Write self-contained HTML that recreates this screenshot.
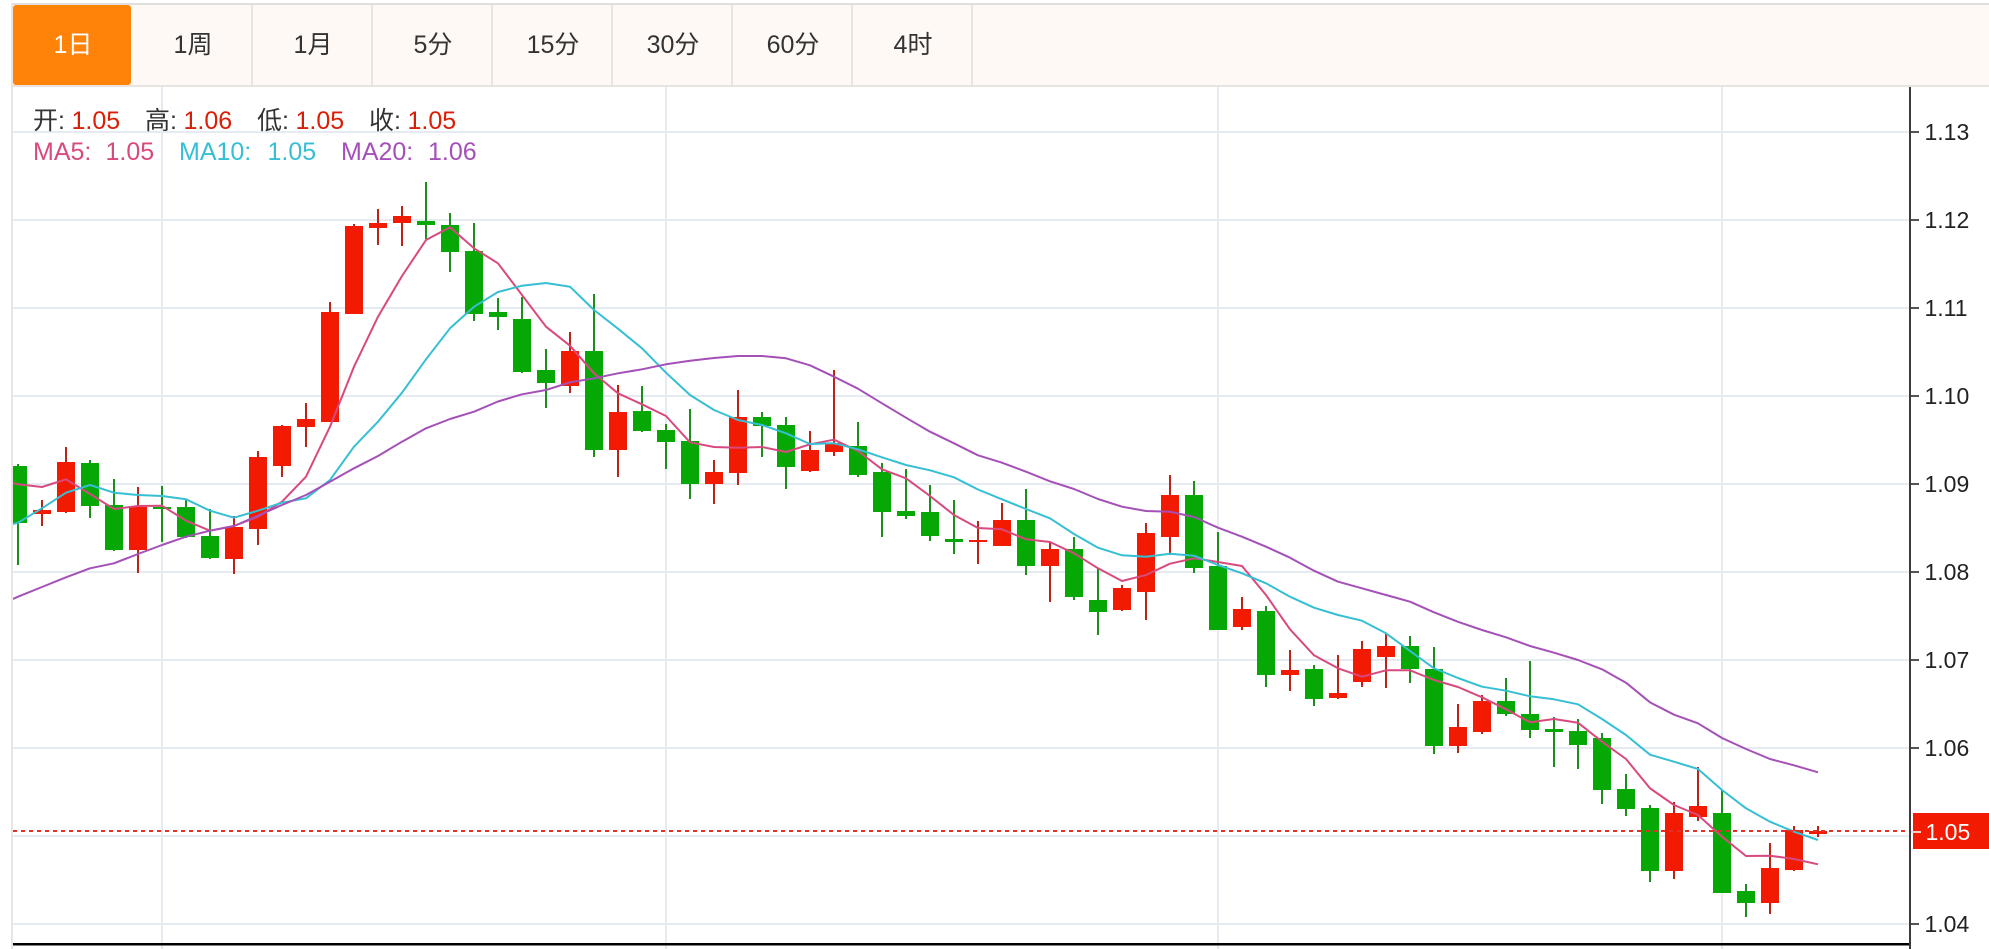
<!DOCTYPE html>
<html><head><meta charset="utf-8"><title>K线图</title>
<style>
html,body{margin:0;padding:0;background:#fff;width:1989px;height:949px;overflow:hidden}
body{position:relative;font-family:"Liberation Sans","WenQuanYi Zen Hei","Noto Sans CJK SC",sans-serif}
.bar{position:absolute;left:12px;top:3px;width:1977px;background:#fef9f5;border-top:2px solid #e0dedc;border-bottom:2px solid #e8e4e0;box-sizing:content-box;height:80px}
.t{position:absolute;top:5px;height:80px;line-height:80px;text-align:center;font-size:25px;color:#333;width:120px;box-sizing:border-box;padding-left:2px}
.sep{position:absolute;top:5px;width:2px;height:80px;background:#e8e4e0}
.act{left:13px;width:118px;background:#ff8209;color:#fff;border-radius:3px}
.l{position:absolute;font-size:25px;line-height:28px;white-space:nowrap}
svg{position:absolute;left:0;top:0}
svg text{font-family:"Liberation Sans",sans-serif}
</style></head><body>
<div class="bar"></div>
<div class="t act">1日</div>
<div class="t" style="left:132px">1周</div>
<div class="t" style="left:252px">1月</div>
<div class="t" style="left:372px">5分</div>
<div class="t" style="left:492px">15分</div>
<div class="t" style="left:612px">30分</div>
<div class="t" style="left:732px">60分</div>
<div class="t" style="left:852px">4时</div>
<div class="sep" style="left:251px"></div><div class="sep" style="left:371px"></div><div class="sep" style="left:491px"></div><div class="sep" style="left:611px"></div><div class="sep" style="left:731px"></div><div class="sep" style="left:851px"></div><div class="sep" style="left:971px"></div>
<svg width="1989" height="949" viewBox="0 0 1989 949">
<defs><clipPath id="c"><rect x="13" y="87" width="1897" height="862"/></clipPath></defs>
<rect x="11" y="3" width="2" height="946" fill="#e8e4e0"/>
<path d="M13 132H1910M13 220H1910M13 308H1910M13 396H1910M13 484H1910M13 572H1910M13 660H1910M13 748H1910M13 836H1910M13 924H1910" stroke="#e5ebf0" stroke-width="2" fill="none"/>
<path d="M162 87V949M666 87V949M1218 87V949M1722 87V949" stroke="#e5ebf0" stroke-width="2" fill="none"/>
<g clip-path="url(#c)" fill="none">
<path stroke="#1b8f1b" stroke-width="2" d="M18 464V565M90 460V518M114 479V551M162 486V542M186 500V538M210 509V559M426 182V239M450 213V272M474 223V321M498 298V330M522 297V373M546 349V408M594 294V457M642 386V432M666 424V469M690 409V499M762 412V457M786 417V489M858 422V477M882 463V537M906 469V519M930 485V541M954 500V554M1026 489V575M1074 537V600M1098 568V635M1194 481V573M1218 532V630M1266 606V687M1314 665V706M1410 636V683M1434 647V754M1506 678V716M1530 661V738M1554 717V767M1578 719V769M1602 733V804M1626 774V816M1650 805V882M1722 790V893M1746 884V917"/>
<path stroke="#bb2319" stroke-width="2" d="M42 500V526M66 447V513M138 487V573M234 516V574M258 451V545M282 425V477M306 403V447M330 302V422M354 224V314M378 209V245M402 206V246M570 332V393M618 385V477M714 460V504M738 390V485M810 431V472M834 370V456M978 521V564M1002 503V546M1050 542V602M1122 585V611M1146 523V620M1170 475V555M1242 597V630M1290 650V691M1338 655V699M1362 641V687M1386 633V688M1458 704V753M1482 695V734M1674 802V879M1698 767V821M1770 843V914M1794 826V871M1818 826V837"/>
<path stroke="#06a806" stroke-width="18" d="M18 466V523M90 463V506M114 505V550M162 507V509M186 507V537M210 536V558M426 221V225M450 225V252M474 251V314M498 312V317M522 319V372M546 370V383M594 351V450M642 411V431M666 430V442M690 441V484M762 417V426M786 425V467M858 446V475M882 472V512M906 511V516M930 512V536M954 539V542M1026 520V566M1074 549V597M1098 600V612M1194 495V568M1218 566V630M1266 611V675M1314 669V699M1410 646V669M1434 669V746M1506 701V714M1530 714V730M1554 729V732M1578 731V745M1602 738V790M1626 789V809M1650 808V871M1722 813V893M1746 891V903"/>
<path stroke="#f21a00" stroke-width="18" d="M42 510V514M66 462V512M138 507V550M234 527V559M258 457V529M282 426V466M306 419V427M330 312V422M354 226V314M378 223V228M402 216V223M570 351V386M618 412V450M714 472V484M738 417V473M810 450V471M834 443V452M978 540V542M1002 520V546M1050 549V566M1122 588V610M1146 533V592M1170 495V537M1242 609V627M1290 670V675M1338 693V698M1362 649V682M1386 646V657M1458 727V746M1482 701V732M1674 813V871M1698 806V817M1770 868V903M1794 830V870M1818 831V834"/>
<path stroke="#d8497f" stroke-width="2" stroke-linejoin="round" d="M13 483L18 484.3L42 487L66 479.3L90 494L114 509L138 506L162 505.7L186 520.7L210 530.7L234 526L258 516.7L282 501.7L306 476.7L330 426.7L354 366.7L378 316.7L402 276L426 240L450 227.3L474 248.3L498 263.3L522 295L546 326.7L570 345.7L594 373.3L618 393.3L642 404.3L666 416L690 442.3L714 447L738 447.7L762 447L786 452L810 444.3L834 439.7L858 451L882 469.3L906 478.3L930 496L954 515L978 528L1002 529.3L1026 539.3L1050 542L1074 553.3L1098 568.3L1122 581L1146 575L1170 563.7L1194 558.3L1218 562L1242 566L1266 595L1290 629.3L1314 655.3L1338 668.3L1362 676.7L1386 670.3L1410 670.3L1434 680L1458 687L1482 697.3L1506 709.3L1530 722.3L1554 719L1578 722.7L1602 741.7L1626 759L1650 788.3L1674 805L1698 815L1722 836.7L1746 856L1770 855.7L1794 859L1818 864.3"/>
<path stroke="#36bfd4" stroke-width="2" stroke-linejoin="round" d="M13 524L18 522.7L42 508.3L66 492.7L90 485L114 492.7L138 495L162 496L186 499.3L210 510.7L234 517.7L258 510.7L282 502.7L306 498.3L330 480L354 446.7L378 421.7L402 392.7L426 359.3L450 328.3L474 306.7L498 292L522 285.7L546 283L570 286.7L594 310L618 328.7L642 348.3L666 372.7L690 395L714 410L738 420L762 425L786 433.3L810 444L834 443.3L858 449.3L882 457.3L906 465L930 470.3L954 477.3L978 489.5L1002 499.3L1026 509L1050 518.3L1074 534L1098 547.7L1122 555.3L1146 556.7L1170 553.7L1194 555.7L1218 565L1242 573.3L1266 583.3L1290 596.7L1314 607.7L1338 615L1362 620.7L1386 633.3L1410 651L1434 668.3L1458 678L1482 686.7L1506 690.7L1530 696.3L1554 699.3L1578 704.3L1602 719L1626 735L1650 754.7L1674 761.7L1698 769L1722 790L1746 808.3L1770 821.7L1794 831.7L1818 840"/>
<path stroke="#a550b8" stroke-width="2" stroke-linejoin="round" d="M13 599L18 596.7L42 587L66 577.3L90 568.3L114 563.3L138 554L162 545L186 536.7L210 530.7L234 526L258 515.7L282 505L306 495L330 481.7L354 468.3L378 456L402 441.7L426 428.3L450 419L474 411.7L498 401.5L522 394.3L546 390L570 382.3L594 378.3L618 373.3L642 369.3L666 364.3L690 360.7L714 358L738 356L762 356L786 358.3L810 365.3L834 376.7L858 388.7L882 403.3L906 417.7L930 431.7L954 443.3L978 455.3L1002 462.7L1026 471.7L1050 481.3L1074 489L1098 499L1122 506.7L1146 511L1170 511.7L1194 517L1218 527.7L1242 536.7L1266 546.7L1290 557.7L1314 570.7L1338 581.7L1362 588.3L1386 595L1410 601.7L1434 612.3L1458 621.8L1482 630L1506 637.3L1530 646L1554 652.7L1578 660L1602 669.3L1626 682.7L1650 702.3L1674 714.7L1698 723.3L1722 738L1746 749L1770 759L1794 765.3L1818 772.3"/>
</g>
<path d="M13 831H1910" stroke="#e0302a" stroke-width="2" stroke-dasharray="4 4" fill="none"/>
<rect x="13" y="943" width="1897" height="2.5" fill="#000"/>
<rect x="1909" y="87" width="2" height="862" fill="#3c3c3c"/>
<path d="M1911 132H1919M1911 220H1919M1911 308H1919M1911 396H1919M1911 484H1919M1911 572H1919M1911 660H1919M1911 748H1919M1911 924H1919" stroke="#555" stroke-width="2" fill="none"/>
<g font-size="23" fill="#222">
<text x="1924.5" y="140">1.13</text><text x="1924.5" y="228">1.12</text><text x="1924.5" y="316">1.11</text><text x="1924.5" y="404">1.10</text><text x="1924.5" y="492">1.09</text><text x="1924.5" y="580">1.08</text><text x="1924.5" y="668">1.07</text><text x="1924.5" y="756">1.06</text><text x="1924.5" y="932">1.04</text>
</g>
<rect x="1913" y="813" width="76" height="36" fill="#f21a00"/>
<rect x="1911" y="831" width="10" height="2" fill="#f6d0c8"/>
<text x="1925.5" y="840" font-size="23" fill="#fff">1.05</text>
</svg>
<div class="l" style="left:33px;top:107px;color:#333">开:</div><div class="l" style="left:71.5px;top:107px;color:#d81e06">1.05</div>
<div class="l" style="left:145px;top:107px;color:#333">高:</div><div class="l" style="left:183.5px;top:107px;color:#d81e06">1.06</div>
<div class="l" style="left:257px;top:107px;color:#333">低:</div><div class="l" style="left:295.5px;top:107px;color:#d81e06">1.05</div>
<div class="l" style="left:369px;top:107px;color:#333">收:</div><div class="l" style="left:407.5px;top:107px;color:#d81e06">1.05</div>
<div class="l" style="left:33px;top:138px;color:#d8497f">MA5:</div><div class="l" style="left:105.5px;top:138px;color:#d8497f">1.05</div>
<div class="l" style="left:179px;top:138px;color:#36bfd4">MA10:</div><div class="l" style="left:267.5px;top:138px;color:#36bfd4">1.05</div>
<div class="l" style="left:341px;top:138px;color:#a550b8">MA20:</div><div class="l" style="left:428px;top:138px;color:#a550b8">1.06</div>
</body></html>
